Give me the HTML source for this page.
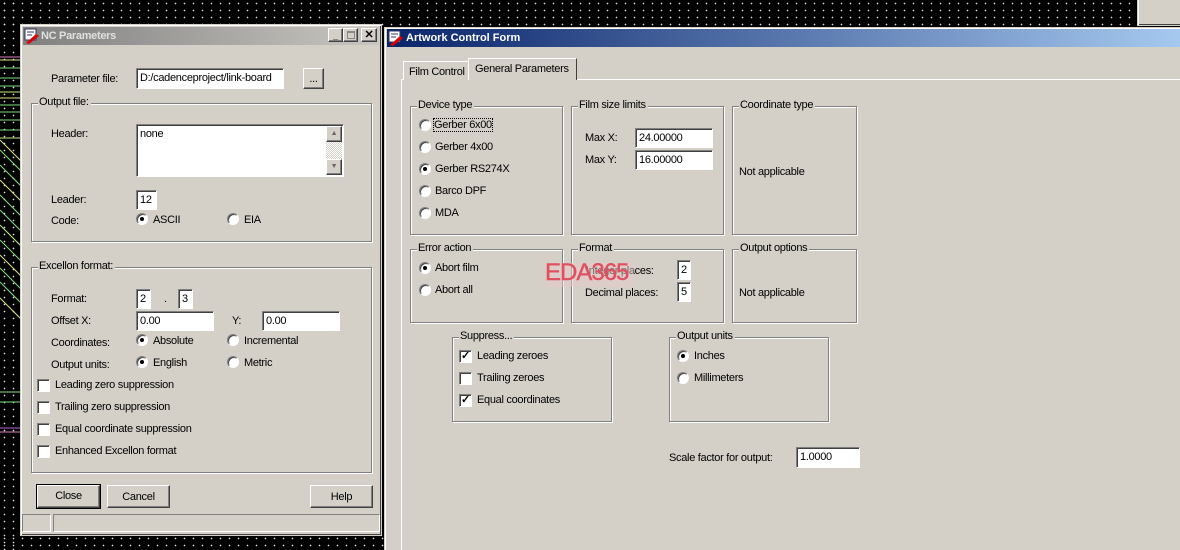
<!DOCTYPE html>
<html style="overflow:hidden;width:1180px;height:550px"><head><meta charset="utf-8">
<style>
*{margin:0;padding:0;box-sizing:border-box}
body{width:1180px;height:550px;overflow:hidden;position:relative;background:#000;font-family:"Liberation Sans",Arial,sans-serif;font-size:11px;letter-spacing:-0.3px;color:#000}
.dots{position:absolute;background-image:radial-gradient(circle,#ddd 0.7px,transparent 0.9px);background-size:9px 7px}
.a{position:absolute;white-space:nowrap}
.t{margin-top:1px}
.win{position:absolute;background:#d4d0c8;border:1px solid #d4d0c8;box-shadow:inset 1px 1px 0 #fff,inset -1px -1px 0 #404040}
.grp{position:absolute;border:1px solid #808080;box-shadow:1px 1px 0 #fff,inset 1px 1px 0 #fff}
.grp>span{position:absolute;top:-8px;left:6px;background:#d4d0c8;padding:0 2px 0 1px}
.inp{position:absolute;background:#fff;border:1px solid;border-color:#808080 #fff #fff #808080;box-shadow:inset 1px 1px 0 #404040;padding:3px 0 0 3px;font-size:11px}
.rad{position:absolute;width:12px;height:12px;border-radius:50%;background:#fff;border:1px solid;border-color:#808080 #fff #fff #808080;box-shadow:inset 1px 1px 0 #404040}
.rad.on::after{content:"";position:absolute;left:3px;top:3px;width:4px;height:4px;border-radius:50%;background:#000}
.chk{position:absolute;width:13px;height:13px;background:#fff;border:1px solid;border-color:#808080 #fff #fff #808080;box-shadow:inset 1px 1px 0 #404040;font-size:11px;line-height:11px;text-align:center;font-weight:bold}
.btn{position:absolute;background:#d4d0c8;border:1px solid;border-color:#fff #404040 #404040 #fff;box-shadow:inset -1px -1px 0 #808080;text-align:center;font-size:11px}
</style></head><body>
<div class="dots" style="left:0;top:0;width:1137px;height:26px"></div>
<div class="dots" style="left:0;top:0;width:20px;height:550px"></div>
<div class="dots" style="left:0;top:535px;width:385px;height:15px"></div>
<svg class="a" style="left:0;top:0" width="22" height="550">
<g stroke-width="1">
<line x1="0" y1="57" x2="22" y2="57" stroke="#e080c0"/><line x1="0" y1="60" x2="22" y2="60" stroke="#e0e080"/>
<line x1="0" y1="68" x2="22" y2="68" stroke="#80e080"/><line x1="0" y1="78" x2="22" y2="78" stroke="#80e080"/>
<line x1="0" y1="86" x2="22" y2="86" stroke="#80e080"/><line x1="0" y1="92" x2="22" y2="92" stroke="#c0f080"/>
<line x1="0" y1="98" x2="22" y2="98" stroke="#e0e080"/><line x1="0" y1="105" x2="22" y2="105" stroke="#80e080"/>
<line x1="0" y1="112" x2="22" y2="112" stroke="#80e080"/><line x1="0" y1="120" x2="22" y2="120" stroke="#80e080"/>
<line x1="0" y1="130" x2="22" y2="130" stroke="#80e080"/><line x1="0" y1="138" x2="22" y2="138" stroke="#c0f080"/>
<line x1="0" y1="140" x2="22" y2="162" stroke="#e0e080"/><line x1="0" y1="150" x2="22" y2="172" stroke="#80e080"/>
<line x1="0" y1="165" x2="22" y2="187" stroke="#80e080"/><line x1="0" y1="180" x2="22" y2="202" stroke="#e0e080"/>
<line x1="0" y1="195" x2="22" y2="217" stroke="#80e080"/><line x1="0" y1="210" x2="22" y2="232" stroke="#80e080"/>
<line x1="0" y1="225" x2="22" y2="247" stroke="#c0f080"/><line x1="0" y1="240" x2="22" y2="262" stroke="#80e080"/>
<line x1="0" y1="255" x2="22" y2="277" stroke="#e0e080"/><line x1="0" y1="268" x2="22" y2="290" stroke="#80e080"/>
<line x1="0" y1="282" x2="22" y2="304" stroke="#80e080"/><line x1="0" y1="298" x2="22" y2="320" stroke="#e0e080"/>
<line x1="0" y1="392" x2="22" y2="392" stroke="#80e080"/><line x1="0" y1="402" x2="22" y2="402" stroke="#80e080"/>
<line x1="0" y1="428" x2="22" y2="428" stroke="#c060e0"/><line x1="0" y1="432" x2="22" y2="432" stroke="#e080c0"/>
</g></svg>
<div class="win" style="left:1137px;top:-2px;width:50px;height:28px"></div>

<!-- NC Parameters -->
<div class="win" style="left:20px;top:24px;width:362px;height:512px"></div>
<div class="a" style="left:23px;top:27px;width:356px;height:18px;background:linear-gradient(90deg,#808080,#c8c6c0)"></div>
<svg class="a" style="left:24px;top:28px" width="16" height="16"><rect x="1" y="1" width="11" height="11" fill="#fff" stroke="#336"/><path d="M3 4h7M3 7h5" stroke="#336"/><path d="M2 15l10-9 3 2-10 8z" fill="#d00"/></svg>
<div class="a" style="left:41px;top:30px;color:#e0e0e0;font-weight:bold;font-size:11px">NC Parameters</div>
<div class="btn" style="left:328px;top:28px;width:15px;height:14px;font-size:9px;line-height:14px;font-weight:bold">_</div>
<div class="btn" style="left:343px;top:28px;width:15px;height:14px"><div class="a" style="left:3px;top:2px;width:8px;height:8px;border:1px solid #888;border-top-width:2px"></div></div>
<div class="btn" style="left:361px;top:28px;width:16px;height:14px;font-size:11px;line-height:12px;font-weight:bold">✕</div>

<div class="a t" style="left:51px;top:72px">Parameter file:</div>
<div class="inp" style="left:136px;top:68px;width:148px;height:21px">D:/cadenceproject/link-board</div>
<div class="btn" style="left:303px;top:68px;width:21px;height:21px;line-height:20px">...</div>

<div class="grp" style="left:31px;top:103px;width:341px;height:139px"><span>Output file:</span></div>
<div class="a t" style="left:51px;top:127px">Header:</div>
<div class="inp" style="left:136px;top:124px;width:208px;height:53px">none</div>
<div class="a" style="left:326px;top:126px;width:16px;height:49px;background:repeating-conic-gradient(#d4d0c8 0 25%,#fff 0 50%) 0 0/2px 2px"></div>
<div class="btn" style="left:326px;top:126px;width:16px;height:16px;font-size:7px;line-height:14px;color:#666">▲</div>
<div class="btn" style="left:326px;top:159px;width:16px;height:16px;font-size:7px;line-height:14px;color:#666">▼</div>
<div class="a t" style="left:51px;top:193px">Leader:</div>
<div class="inp" style="left:136px;top:190px;width:21px;height:20px">12</div>
<div class="a t" style="left:51px;top:214px">Code:</div>
<div class="rad on" style="left:136px;top:213px"></div><div class="a t" style="left:153px;top:213px">ASCII</div>
<div class="rad" style="left:227px;top:213px"></div><div class="a t" style="left:244px;top:213px">EIA</div>

<div class="grp" style="left:31px;top:267px;width:341px;height:206px"><span>Excellon format:</span></div>
<div class="a t" style="left:51px;top:292px">Format:</div>
<div class="inp" style="left:136px;top:289px;width:15px;height:20px">2</div>
<div class="a t" style="left:164px;top:292px">.</div>
<div class="inp" style="left:178px;top:289px;width:15px;height:20px">3</div>
<div class="a t" style="left:51px;top:314px">Offset X:</div>
<div class="inp" style="left:136px;top:311px;width:78px;height:20px">0.00</div>
<div class="a t" style="left:232px;top:314px">Y:</div>
<div class="inp" style="left:262px;top:311px;width:78px;height:20px">0.00</div>
<div class="a t" style="left:51px;top:336px">Coordinates:</div>
<div class="rad on" style="left:136px;top:334px"></div><div class="a t" style="left:153px;top:334px">Absolute</div>
<div class="rad" style="left:227px;top:334px"></div><div class="a t" style="left:244px;top:334px">Incremental</div>
<div class="a t" style="left:51px;top:358px">Output units:</div>
<div class="rad on" style="left:136px;top:356px"></div><div class="a t" style="left:153px;top:356px">English</div>
<div class="rad" style="left:227px;top:356px"></div><div class="a t" style="left:244px;top:356px">Metric</div>
<div class="chk" style="left:37px;top:379px"></div><div class="a t" style="left:55px;top:378px">Leading zero suppression</div>
<div class="chk" style="left:37px;top:401px"></div><div class="a t" style="left:55px;top:400px">Trailing zero suppression</div>
<div class="chk" style="left:37px;top:423px"></div><div class="a t" style="left:55px;top:422px">Equal coordinate suppression</div>
<div class="chk" style="left:37px;top:445px"></div><div class="a t" style="left:55px;top:444px">Enhanced Excellon format</div>

<div class="btn" style="left:37px;top:485px;width:63px;height:23px;line-height:21px;outline:1px solid #000">Close</div>
<div class="btn" style="left:107px;top:485px;width:63px;height:23px;line-height:22px">Cancel</div>
<div class="btn" style="left:310px;top:485px;width:63px;height:23px;line-height:22px">Help</div>
<div class="a" style="left:22px;top:514px;width:29px;height:18px;border:1px solid;border-color:#808080 #fff #fff #808080"></div>
<div class="a" style="left:53px;top:514px;width:327px;height:18px;border:1px solid;border-color:#808080 #fff #fff #808080"></div>

<!-- Artwork Control Form -->
<div class="win" style="left:384px;top:27px;width:806px;height:540px"></div>
<div class="a" style="left:387px;top:29px;width:800px;height:18px;background:linear-gradient(90deg,#0a246a,#a6caf0)"></div>
<svg class="a" style="left:388px;top:30px" width="16" height="16"><rect x="1" y="1" width="11" height="11" fill="#fff" stroke="#336"/><path d="M3 4h7M3 7h5" stroke="#336"/><path d="M2 15l10-9 3 2-10 8z" fill="#d00"/></svg>
<div class="a" style="left:406px;top:32px;color:#fff;font-weight:bold;font-size:11px;letter-spacing:0">Artwork Control Form</div>

<div class="a" style="left:401px;top:79px;width:790px;height:490px;border-left:1px solid #fff;border-top:1px solid #fff"></div>
<div class="a" style="left:403px;top:61px;width:66px;height:19px;border:1px solid #fff;border-bottom:none;border-right:1px solid #808080;background:#d4d0c8;padding:4px 0 0 5px">Film Control</div>
<div class="a" style="left:468px;top:58px;width:109px;height:22px;border:1px solid #fff;border-bottom:none;border-right:1px solid #404040;background:#d4d0c8;padding:4px 0 0 6px">General Parameters</div>

<div class="grp" style="left:410px;top:106px;width:153px;height:129px"><span>Device type</span></div>
<div class="rad" style="left:419px;top:119px"></div><div class="a t" style="left:434px;top:118px;outline:1px dotted #000">Gerber 6x00</div>
<div class="rad" style="left:419px;top:141px"></div><div class="a t" style="left:435px;top:140px">Gerber 4x00</div>
<div class="rad on" style="left:419px;top:163px"></div><div class="a t" style="left:435px;top:162px">Gerber RS274X</div>
<div class="rad" style="left:419px;top:185px"></div><div class="a t" style="left:435px;top:184px">Barco DPF</div>
<div class="rad" style="left:419px;top:207px"></div><div class="a t" style="left:435px;top:206px">MDA</div>

<div class="grp" style="left:571px;top:106px;width:153px;height:129px"><span>Film size limits</span></div>
<div class="a t" style="left:585px;top:131px">Max X:</div>
<div class="inp" style="left:635px;top:128px;width:78px;height:20px">24.00000</div>
<div class="a t" style="left:585px;top:153px">Max Y:</div>
<div class="inp" style="left:635px;top:150px;width:78px;height:20px">16.00000</div>

<div class="grp" style="left:732px;top:106px;width:125px;height:129px"><span>Coordinate type</span></div>
<div class="a t" style="left:739px;top:165px">Not applicable</div>

<div class="grp" style="left:410px;top:249px;width:153px;height:74px"><span>Error action</span></div>
<div class="rad on" style="left:419px;top:262px"></div><div class="a t" style="left:435px;top:261px">Abort film</div>
<div class="rad" style="left:419px;top:284px"></div><div class="a t" style="left:435px;top:283px">Abort all</div>

<div class="grp" style="left:571px;top:249px;width:153px;height:74px"><span>Format</span></div>
<div class="a t" style="left:586px;top:264px">Integer places:</div>
<div class="inp" style="left:677px;top:260px;width:14px;height:20px">2</div>
<div class="a t" style="left:585px;top:286px">Decimal places:</div>
<div class="inp" style="left:677px;top:282px;width:14px;height:20px">5</div>
<div class="a" style="left:546px;top:263px;width:88px;height:24px;background:rgba(230,200,200,0.5)"></div>
<div class="a" style="left:545px;top:259px;color:#e05060;font-size:24px;letter-spacing:-1px;-webkit-text-stroke:0.4px #e05060">EDA365</div>

<div class="grp" style="left:732px;top:249px;width:125px;height:74px"><span>Output options</span></div>
<div class="a t" style="left:739px;top:286px">Not applicable</div>

<div class="grp" style="left:452px;top:337px;width:160px;height:85px"><span>Suppress...</span></div>
<div class="chk" style="left:459px;top:350px">✓</div><div class="a t" style="left:477px;top:349px">Leading zeroes</div>
<div class="chk" style="left:459px;top:372px"></div><div class="a t" style="left:477px;top:371px">Trailing zeroes</div>
<div class="chk" style="left:459px;top:394px">✓</div><div class="a t" style="left:477px;top:393px">Equal coordinates</div>

<div class="grp" style="left:669px;top:337px;width:160px;height:85px"><span>Output units</span></div>
<div class="rad on" style="left:677px;top:350px"></div><div class="a t" style="left:694px;top:349px">Inches</div>
<div class="rad" style="left:677px;top:372px"></div><div class="a t" style="left:694px;top:371px">Millimeters</div>

<div class="a t" style="left:669px;top:451px">Scale factor for output:</div>
<div class="inp" style="left:796px;top:447px;width:64px;height:21px">1.0000</div>
</body></html>
